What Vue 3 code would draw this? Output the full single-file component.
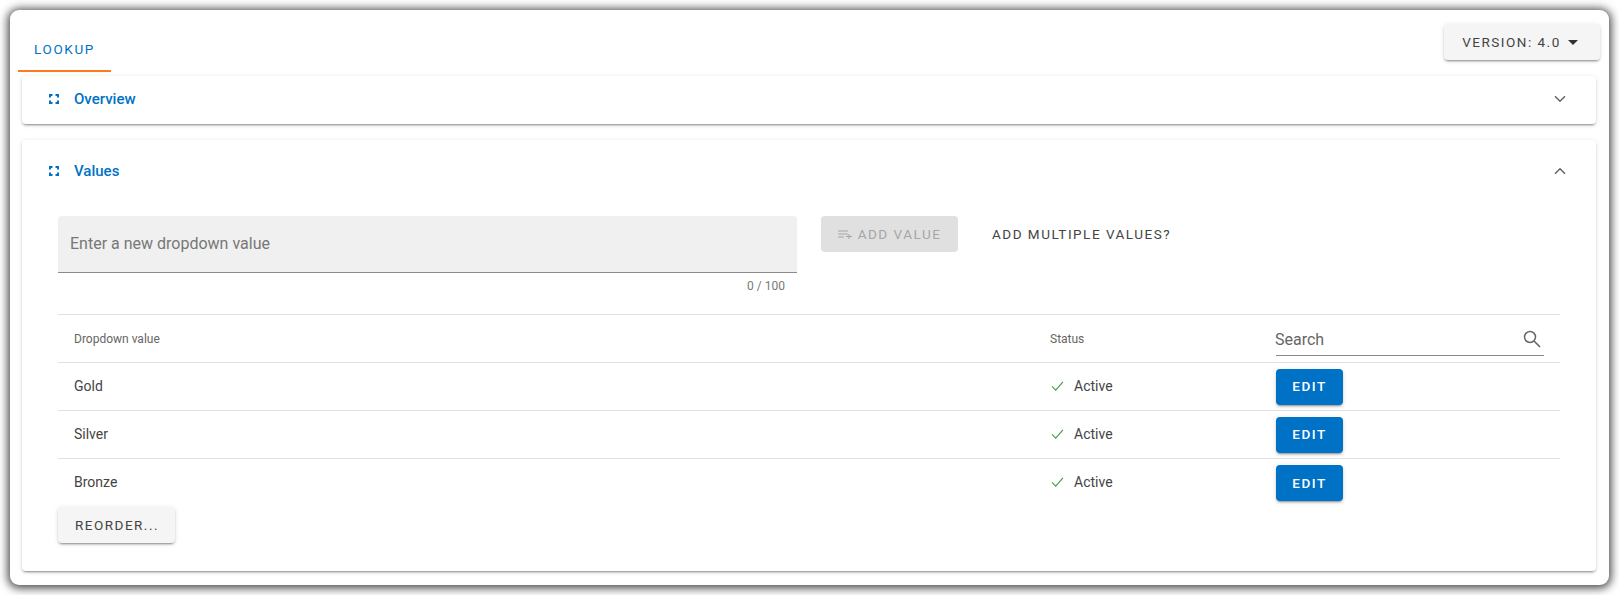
<template>
  <div class="page">
    <div class="sheet">
      <div class="tab-bar">
        <div class="tab">LOOKUP</div>
        <button class="btn version-btn">
          VERSION: 4.0
          <svg class="caret" viewBox="0 0 10 5" width="10" height="5"><path d="M0 0h10L5 5z" fill="#333" /></svg>
        </button>
      </div>

      <section class="panel overview">
        <header class="panel-head">
          <svg class="corners" viewBox="0 0 10 10" width="10" height="10">
            <path d="M1 3.500V1h2.500M6.500 1H9v2.500M9 6.500V9H6.500M3.500 9H1V6.500" fill="none" stroke="#0072c6" stroke-width="2" />
          </svg>
          <span class="panel-title">Overview</span>
          <svg class="chevron" viewBox="0 0 12 8" width="12" height="8"><path d="M1 1.200l5 5 5-5" fill="none" stroke="#666" stroke-width="1.500" /></svg>
        </header>
      </section>

      <section class="panel values">
        <header class="panel-head values-head">
          <svg class="corners" viewBox="0 0 10 10" width="10" height="10">
            <path d="M1 3.500V1h2.500M6.500 1H9v2.500M9 6.500V9H6.500M3.500 9H1V6.500" fill="none" stroke="#0072c6" stroke-width="2" />
          </svg>
          <span class="panel-title">Values</span>
          <svg class="chevron" viewBox="0 0 12 8" width="12" height="8"><path d="M1 6.800l5-5 5 5" fill="none" stroke="#666" stroke-width="1.500" /></svg>
        </header>

        <div class="panel-body">
          <div class="add-row">
            <div class="field">
              <div class="field-box">Enter a new dropdown value</div>
              <div class="counter">0 / 100</div>
            </div>
            <button class="btn add-btn" disabled>
              <svg viewBox="0 0 14 9" width="14" height="9">
                <path d="M0 1h10M0 4h10M0 7h6M8 6.500h6M11 4v5" fill="none" stroke="#a6a6a6" stroke-width="1" />
              </svg>
              ADD VALUE
            </button>
            <div class="multi">ADD MULTIPLE VALUES?</div>
          </div>

          <div class="row head-row">
            <div class="col-name">Dropdown value</div>
            <div class="col-status">Status</div>
            <div class="col-action search">
              <span>Search</span>
              <svg viewBox="0 0 18 18" width="18" height="18">
                <circle cx="7" cy="7" r="5.500" fill="none" stroke="#666" stroke-width="1.500" />
                <path d="M11 11l6 6" stroke="#666" stroke-width="1.600" />
              </svg>
            </div>
          </div>
          <div class="row body-row" v-for="item in rows" :key="item">
            <div class="col-name">{{ item }}</div>
            <div class="col-status active">
              <svg viewBox="0 0 14 11" width="13" height="10"><path d="M1 6l4 4 8-9" fill="none" stroke="#43a047" stroke-width="1.300" /></svg>
              Active
            </div>
            <div class="col-action"><button class="btn edit-btn">EDIT</button></div>
          </div>

          <button class="btn reorder-btn">REORDER...</button>
        </div>
      </section>
    </div>
  </div>
</template>

<script setup>
const rows = ["Gold", "Silver", "Bronze"];
</script>

<style>
html,
body {
  margin: 0;
  background: #fff;
}
</style>

<style scoped>
.page {
  width: 1619px;
  height: 595px;
  box-sizing: border-box;
  padding: 10px;
  overflow: hidden;
  font-family: Roboto, "Liberation Sans", sans-serif;
  color: #444;
}
.sheet {
  box-sizing: border-box;
  height: 575px;
  padding: 0 13px 0 12px;
  background: #fff;
  border-radius: 9px;
  box-shadow: 0 1px 10px 2px rgba(0, 0, 0, 0.75);
}
.tab-bar {
  display: flex;
  justify-content: space-between;
  height: 66px;
  margin-left: -4px;
}
.tab {
  box-sizing: border-box;
  width: 93px;
  height: 62px;
  padding-top: 31px;
  text-align: center;
  font-size: 13.500px;
  line-height: 16px;
  letter-spacing: 1.600px;
  color: #0072c6;
  border-bottom: 2px solid #ff7a1f;
}
.btn {
  border: none;
  font-family: inherit;
  font-weight: 400;
  border-radius: 4px;
  font-size: 13.500px;
  letter-spacing: 1.500px;
  background: #f5f5f5;
  color: #444;
  padding: 0;
  box-shadow: 0 3px 1px -2px rgba(0, 0, 0, 0.2), 0 2px 2px 0 rgba(0, 0, 0, 0.14), 0 1px 5px 0 rgba(0, 0, 0, 0.12);
}
.version-btn {
  display: flex;
  align-items: center;
  justify-content: center;
  gap: 7px;
  width: 156px;
  height: 36px;
  margin: 14px -4px 0 0;
  padding-right: 4px;
}
.panel {
  background: #fff;
  border-radius: 4px;
  box-shadow: 0 3px 1px -2px rgba(0, 0, 0, 0.2), 0 2px 2px 0 rgba(0, 0, 0, 0.14), 0 1px 5px 0 rgba(0, 0, 0, 0.12);
}
.overview {
  height: 48px;
  margin-bottom: 16px;
}
.values {
  height: 431px;
}
.panel-head {
  display: flex;
  align-items: center;
  height: 46px;
  padding: 0 30px 2px 27px;
}
.values-head {
  height: 62px;
  padding-bottom: 0;
}
.panel-title {
  margin-left: 15px;
  font-size: 15px;
  font-weight: 500;
  color: #0072c6;
}
.chevron {
  margin-left: auto;
}
.panel-body {
  padding: 14px 36px 0;
}
.add-row {
  display: flex;
  align-items: flex-start;
  height: 98px;
}
.field {
  width: 739px;
}
.field-box {
  box-sizing: border-box;
  height: 57px;
  padding: 0 12px;
  line-height: 55px;
  font-size: 16px;
  color: #777;
  background: #f0f0f0;
  border-radius: 4px 4px 0 0;
  border-bottom: 1px solid #8a8a8a;
}
.counter {
  margin-top: 6px;
  padding-right: 12px;
  text-align: right;
  font-size: 12px;
  line-height: 14px;
  color: #777;
}
.add-btn {
  display: flex;
  align-items: center;
  justify-content: center;
  gap: 6px;
  width: 137px;
  height: 36px;
  margin-left: 24px;
  background: #e0e0e0;
  color: #a6a6a6;
  box-shadow: none;
}
.multi {
  margin-left: 34px;
  height: 36px;
  line-height: 36px;
  font-size: 13.500px;
  letter-spacing: 1.500px;
  color: #444;
}
.row {
  display: flex;
  align-items: center;
  height: 48px;
  box-sizing: border-box;
  border-top: 1px solid #e0e0e0;
  font-size: 14px;
}
.row:last-of-type {
  height: 49px;
}
.body-row .col-name,
.body-row .active {
  margin-bottom: 2px;
}
.head-row {
  font-size: 12px;
  color: #666;
}
.col-name {
  width: 992px;
  padding-left: 16px;
  flex-shrink: 0;
  box-sizing: border-box;
}
.col-status {
  width: 226px;
  flex-shrink: 0;
}
.active {
  display: flex;
  align-items: center;
  gap: 10px;
  padding-left: 1px;
  box-sizing: border-box;
}
.col-action {
  flex: 1;
}
.search {
  box-sizing: border-box;
  display: flex;
  align-items: center;
  justify-content: space-between;
  flex: none;
  width: 268px;
  height: 34px;
  margin-top: 1px;
  padding: 1px 3px 0 0;
  font-size: 16px;
  color: #666;
  border-bottom: 1px solid #8a8a8a;
}
.search span {
  margin-left: -1px;
}
.edit-btn {
  display: block;
  width: 67px;
  height: 36px;
  padding-bottom: 1px;
  background: #0072c6;
  color: #fff;
  font-weight: 500;
}
.reorder-btn {
  display: block;
  width: 117px;
  height: 36px;
  padding-left: 1px;
}
</style>
